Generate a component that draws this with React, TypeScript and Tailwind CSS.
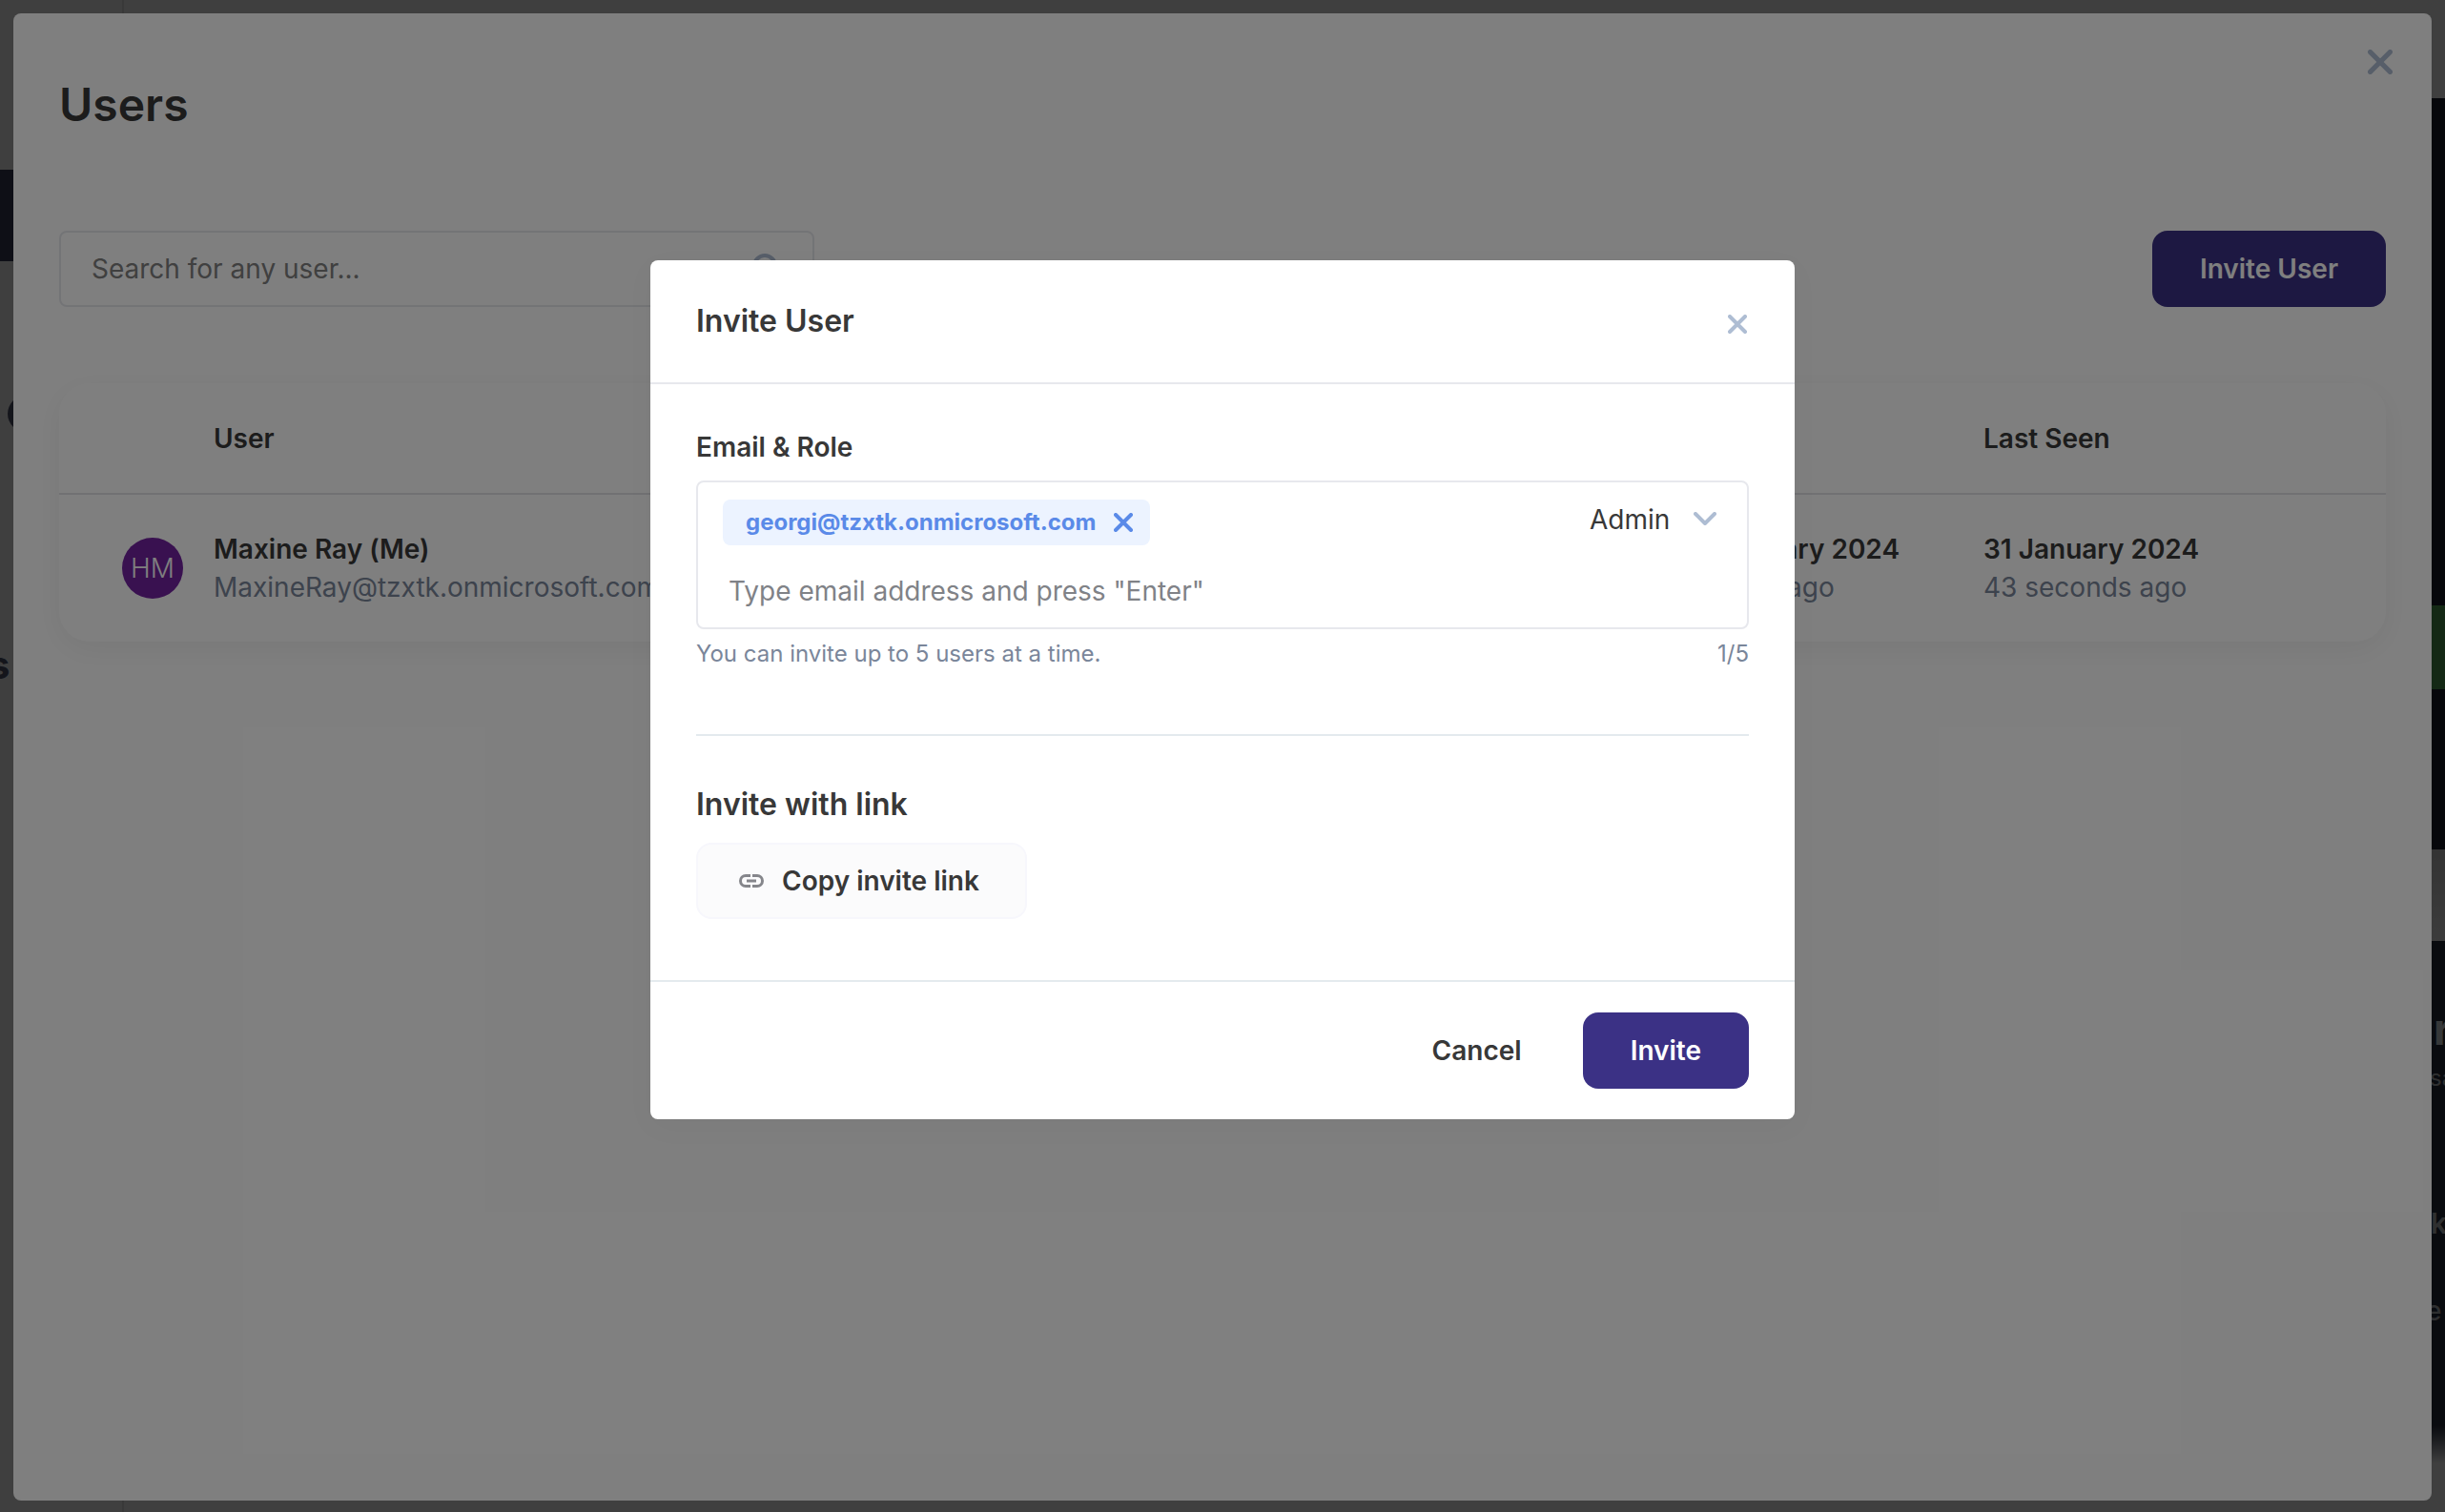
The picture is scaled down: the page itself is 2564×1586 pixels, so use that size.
import React from "react";

function CloseIcon({ className }: { className?: string }) {
  return (
    <svg viewBox="0 0 20 20" className={className} fill="none" stroke="currentColor" strokeWidth="4" strokeLinecap="round" aria-hidden="true">
      <path d="M2 2L18 18M18 2L2 18" />
    </svg>
  );
}

function ChevronIcon() {
  return (
    <svg viewBox="0 0 24 14" className="h-[14px] w-6 text-[#aebdd3]" fill="none" stroke="currentColor" strokeWidth="4" strokeLinecap="round" strokeLinejoin="round" aria-hidden="true">
      <path d="M2 2L12 12L22 2" />
    </svg>
  );
}

function LinkIcon() {
  return (
    <svg viewBox="0 0 26 14" className="h-[14px] w-[26px] text-[#85868b]" fill="none" stroke="currentColor" strokeWidth="3" aria-hidden="true">
      <path d="M12 1.5H7A5.5 5.5 0 0 0 7 12.5H12M14 1.5H19A5.5 5.5 0 0 1 19 12.5H14M8 7H18" />
    </svg>
  );
}

function SearchIcon() {
  return (
    <svg viewBox="0 0 32 32" className="size-8 text-[#aebdd3]" fill="none" stroke="currentColor" strokeWidth="4" strokeLinecap="round" aria-hidden="true">
      <circle cx="14" cy="14" r="11" />
      <path d="M22 22L29 29" />
    </svg>
  );
}

/* The page that lies under the panel; only its edges stay in view. */
function Backdrop() {
  return (
    <div aria-hidden="true" className="absolute inset-0 overflow-hidden bg-white">
      <div className="absolute left-32 top-0 h-full w-[2px] bg-[#e6e6e6]" />
      <div className="absolute left-0 top-[178px] h-24 w-32 bg-[#383c58]" />
      <div className="absolute left-2 top-[415px] size-[38px] rounded-full bg-[#52566e]" />
      <div className="absolute -left-3 top-[674px] text-[40px] leading-[48px] font-bold text-[#52566e]">s</div>
      <div className="absolute right-0 top-[103px] h-[532px] w-32 bg-[#1a1e2e]" />
      <div className="absolute right-0 top-[635px] h-[88px] w-32 bg-[#50a454]" />
      <div className="absolute right-0 top-[723px] h-[168px] w-32 bg-[#1a1e2e]" />
      <div className="absolute right-0 top-[891px] h-24 w-32 bg-linear-to-b from-[#d0d0d0] to-[#f0f0f0]" />
      <div className="absolute right-0 top-[987px] h-[508px] w-5 bg-[#262c3c] text-[#b8bcc0]">
        <div className="pt-16 pl-2 text-[46px] leading-[56px] font-bold text-[#d8e2e6]">r</div>
        <div className="pt-2 pl-1 text-2xl leading-8">sa</div>
        <div className="pt-[116px] pl-[5px] text-[30px] leading-10 font-semibold">k</div>
        <div className="pt-[52px] text-[28px] leading-10 font-medium">e</div>
      </div>
      <div className="absolute right-0 top-[1495px] h-10 w-32 bg-linear-to-b from-[#262c3c] to-white" />
    </div>
  );
}

function UsersPanel() {
  return (
    <main className="absolute inset-x-[14px] top-[14px] bottom-3 rounded-lg bg-white px-12">
      <button type="button" aria-label="Close users" className="absolute right-[41px] top-[38px] text-[#aebdd3]">
        <CloseIcon className="size-[26px]" />
      </button>
      <h1 className="pt-16 text-[48px] leading-[64px] font-semibold">Users</h1>

      <div className="mt-[100px] flex items-center justify-between">
        <div className="relative w-[792px]">
          <input
            type="text"
            aria-label="Search for any user"
            placeholder="Search for any user..."
            className="h-20 w-full rounded-lg border-2 border-[#e7e8ed] pr-20 pl-8 text-[28px] placeholder:text-[#808080]"
          />
          <span className="absolute top-[23px] right-[34px]">
            <SearchIcon />
          </span>
        </div>
        <button type="button" className="h-20 rounded-2xl bg-[#3b3185] px-[50px] font-semibold text-white">
          Invite User
        </button>
      </div>

      <div className="mt-20 rounded-[32px] shadow-[0_8px_32px_rgba(0,0,0,0.06)]">
        <table className="w-full table-fixed text-left leading-10">
          <colgroup>
            <col className="w-[162px]" />
            <col />
            <col className="w-[314px]" />
            <col className="w-[422px]" />
          </colgroup>
          <thead>
            <tr className="h-[116px] border-b-2 border-[#e2e3e7]">
              <th />
              <th className="font-semibold">User</th>
              <th className="font-semibold">Joined</th>
              <th className="font-semibold">Last Seen</th>
            </tr>
          </thead>
          <tbody>
            <tr className="h-[155px]">
              <td className="pl-[66px]">
                <span className="flex size-16 items-center justify-center rounded-full bg-[#7222a0] font-light text-white">HM</span>
              </td>
              <td>
                <p className="font-semibold">Maxine Ray (Me)</p>
                <p className="text-[#7a869a]">MaxineRay@tzxtk.onmicrosoft.com</p>
              </td>
              <td>
                <p className="font-semibold">31 January 2024</p>
                <p className="text-[#7a869a]">2 hours ago</p>
              </td>
              <td>
                <p className="font-semibold">31 January 2024</p>
                <p className="text-[#7a869a]">43 seconds ago</p>
              </td>
            </tr>
          </tbody>
        </table>
      </div>
    </main>
  );
}

function InviteDialog() {
  return (
    <div role="dialog" aria-modal="true" aria-labelledby="invite-title" className="w-[1200px] max-w-full rounded-lg bg-white shadow-[0_8px_32px_rgba(0,0,0,0.03)]">
      <header className="flex h-[130px] items-center justify-between border-b-2 border-[#e7e8ed] px-12">
        <h2 id="invite-title" className="text-[32px] leading-10 font-semibold">Invite User</h2>
        <button type="button" aria-label="Close dialog" className="mr-[2px] pt-1.5 text-[#aebdd3]">
          <CloseIcon className="size-5" />
        </button>
      </header>

      <div className="px-12 pt-[46px]">
        <label htmlFor="invite-email" className="block leading-10 font-semibold">Email &amp; Role</label>
        <div className="mt-[15px] flex h-[156px] items-start justify-between rounded-lg border-2 border-[#e7e8ed] py-[18px] pr-8 pl-[26px]">
          <div className="flex min-w-0 flex-1 flex-col items-start">
            <span className="flex h-12 items-center gap-[19px] rounded-lg bg-[#ecf3ff] pr-[18px] pl-6 text-2xl font-bold text-[#5a8ae8]">
              georgi@tzxtk.onmicrosoft.com
              <button type="button" aria-label="Remove georgi@tzxtk.onmicrosoft.com">
                <CloseIcon className="size-5" />
              </button>
            </span>
            <input
              id="invite-email"
              type="email"
              placeholder='Type email address and press "Enter"'
              className="mt-7 h-10 w-full pl-[6px] text-[28px] outline-none placeholder:text-[#808287]"
            />
          </div>
          <div className="relative flex items-center">
            <select aria-label="Role" defaultValue="Admin" className="h-10 appearance-none bg-transparent pr-12 text-[28px]">
              <option>Admin</option>
            </select>
            <span className="pointer-events-none absolute right-0">
              <ChevronIcon />
            </span>
          </div>
        </div>
        <div className="mt-[10px] flex justify-between text-2xl leading-8 text-[#7a869a]">
          <p>You can invite up to 5 users at a time.</p>
          <p>1/5</p>
        </div>

        <section className="mt-[68px] border-t-2 border-[#e4eaee] pt-[52px] pb-16">
          <h3 className="text-[32px] leading-10 font-semibold">Invite with link</h3>
          <button type="button" className="mt-5 flex h-20 items-center gap-[19px] rounded-2xl border-2 border-[#f7f7fc] bg-[#fbfbfc] pr-12 pl-[43px] font-semibold">
            <LinkIcon />
            Copy invite link
          </button>
        </section>
      </div>

      <footer className="flex items-center justify-end gap-4 border-t-2 border-[#e4eaee] px-12 py-8">
        <button type="button" className="h-20 rounded-2xl px-12 font-semibold">Cancel</button>
        <button type="button" className="h-20 rounded-2xl bg-[#3b3185] px-[50px] font-semibold text-white">Invite</button>
      </footer>
    </div>
  );
}

export default function App() {
  return (
    <div className="relative h-screen overflow-hidden font-['Inter',sans-serif] text-[28px] text-[#383838]">
      <Backdrop />
      <div className="absolute inset-0 bg-black/50" />
      <UsersPanel />
      <div className="absolute inset-0 flex items-start justify-center bg-black/50 pt-[273px]">
        <InviteDialog />
      </div>
    </div>
  );
}
